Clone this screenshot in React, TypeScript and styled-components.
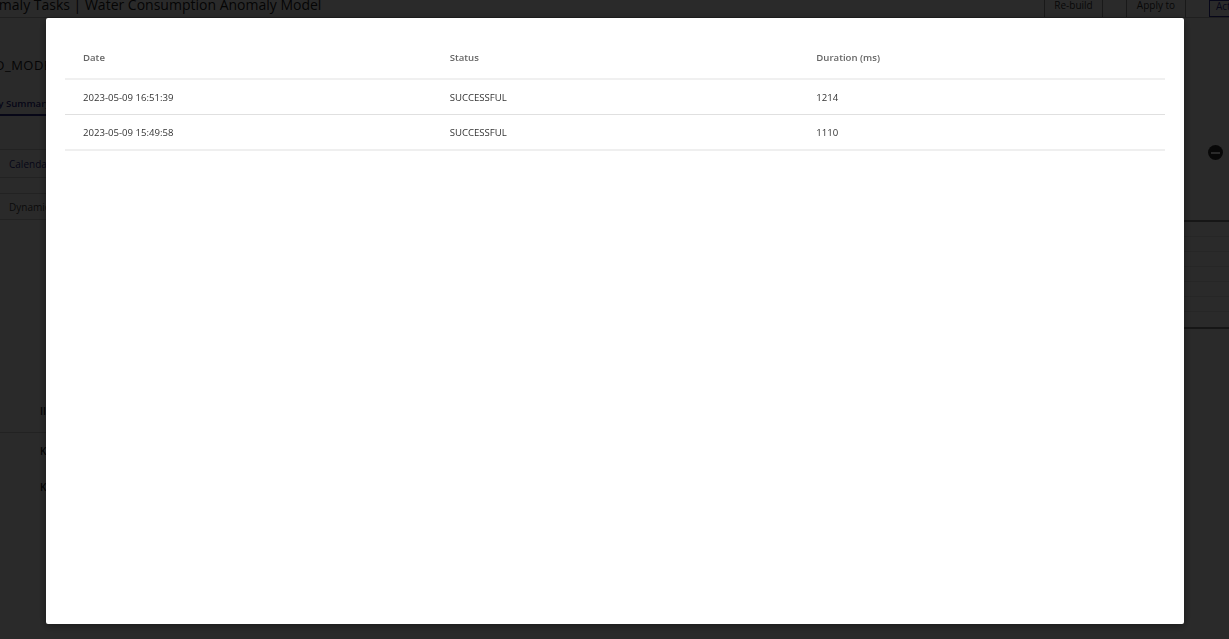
import React from "react";
import styled, { createGlobalStyle } from "styled-components";

const Global = createGlobalStyle`
  html, body { margin: 0; padding: 0; }
  body { font-family: "Open Sans", "Liberation Sans", sans-serif; background: #fff; overflow: hidden; }
  * { box-sizing: border-box; }
`;

const Page = styled.div`
  width: 1229px;
  height: 639px;
  background: #fff;
  overflow: hidden;
  display: flex;
  flex-direction: column;
`;

const Header = styled.header`
  height: 18px;
  display: flex;
  align-items: flex-start;
  border-bottom: 1px solid #bbb;
  overflow: hidden;
`;

const Title = styled.h1`
  margin: -5px 0 0 -27px;
  font-size: 14px;
  font-weight: 400;
  color: #222;
  line-height: 20px;
  flex: 1;
  white-space: nowrap;
`;

const Actions = styled.div`
  display: flex;
  height: 18px;
  margin-right: -20px;
`;

const ActionBtn = styled.div<{ $outlined?: boolean; $w: number }>`
  width: ${(p) => p.$w}px;
  height: 17px;
  font-size: 10px;
  line-height: 10px;
  text-align: center;
  white-space: nowrap;
  overflow: hidden;
  color: ${(p) => (p.$outlined ? "#2c2c9a" : "#333")};
  border-left: 1px solid #999;
  border-right: 1px solid #999;
  ${(p) => (p.$outlined ? "border: 1px solid #2c2c9a; text-align: left; padding-left: 6px;" : "")}
  & + & { margin-left: 23px; }
`;

const Body = styled.div`
  flex: 1;
  display: flex;
`;

const LeftCol = styled.div`
  width: 600px;
  margin-left: -10px;
  display: flex;
  flex-direction: column;
`;

const ModelName = styled.div`
  margin-top: 38px;
  margin-left: 5px;
  font-size: 13px;
  color: #222;
  letter-spacing: 0.5px;
`;

const Tabs = styled.div`
  margin-top: 21px;
  display: flex;
`;

const Tab = styled.div<{ $active?: boolean }>`
  font-size: 9.6px;
  font-weight: 600;
  padding: 2px 0 4px 0;
  white-space: nowrap;
  margin-left: ${(p) => (p.$active ? "-20px" : "30px")};
  color: ${(p) => (p.$active ? "#2a2a8a" : "#555")};
  border-bottom: 2px solid ${(p) => (p.$active ? "#2a2a8a" : "transparent")};
`;

const SideList = styled.div`
  margin-top: 33px;
  display: flex;
  flex-direction: column;
`;

const SideItem = styled.div<{ $active?: boolean; $h: number; $gap?: number }>`
  height: ${(p) => p.$h}px;
  margin-top: ${(p) => p.$gap ?? 0}px;
  padding-left: 19px;
  display: flex;
  align-items: center;
  font-size: 10px;
  color: ${(p) => (p.$active ? "#2a2a8a" : "#444")};
  border-top: 1px solid #ccc;
  border-bottom: 1px solid #ccc;
`;

const Props = styled.div`
  margin-top: 169px;
  display: flex;
  flex-direction: column;
  width: 300px;
`;

const PropRow = styled.div<{ $line?: boolean; $h: number }>`
  height: ${(p) => p.$h}px;
  padding-left: 50px;
  display: flex;
  align-items: center;
  font-size: 10px;
  font-weight: 600;
  color: #222;
  border-bottom: ${(p) => (p.$line ? "1px solid #ccc" : "none")};
`;

const RightCol = styled.div`
  flex: 1;
  display: flex;
  flex-direction: column;
  align-items: flex-end;
`;

const MinusIcon = styled.div`
  margin-top: 127px;
  margin-right: 6px;
  width: 15px;
  height: 15px;
  border-radius: 50%;
  background: #333;
  display: flex;
  align-items: center;
  justify-content: center;
  &::after {
    content: "";
    width: 9px;
    height: 2px;
    background: #fff;
  }
`;

const DataTableBg = styled.div`
  margin-top: 60px;
  width: 500px;
  border-top: 2px solid #888;
  border-bottom: 2px solid #888;
`;

const DataRowBg = styled.div`
  height: 15px;
  border-bottom: 1px solid #e4e4e4;
  &:last-child { border-bottom: none; }
`;

const Overlay = styled.div`
  position: fixed;
  inset: 0;
  background: rgba(0, 0, 0, 0.835);
  display: flex;
  padding: 18px 45px 15px 46px;
`;

const Modal = styled.div`
  flex: 1;
  background: #fff;
  border-radius: 2px;
  box-shadow: 0 2px 8px rgba(0, 0, 0, 0.4);
  padding: 18px 19px 19px 19px;
`;

const Table = styled.table`
  width: 100%;
  border-collapse: collapse;
  table-layout: fixed;
`;

const Th = styled.th`
  text-align: left;
  font-size: 9.6px;
  font-weight: 600;
  color: #666;
  height: 43px;
  padding: 0 18px;
  border-bottom: 2px solid #f0f0f0;
  vertical-align: middle;
`;

const Td = styled.td<{ $last?: boolean }>`
  font-size: 9.6px;
  color: #333;
  height: ${(p) => (p.$last ? 36 : 35)}px;
  padding: ${(p) => (p.$last ? "1px 18px 0" : "1px 18px 0")};
  border-bottom: ${(p) => (p.$last ? "2px solid #efefef" : "1px solid #e0e0e0")};
  vertical-align: middle;
`;

const rows = [
  { date: "2023-05-09 16:51:39", status: "SUCCESSFUL", duration: "1214" },
  { date: "2023-05-09 15:49:58", status: "SUCCESSFUL", duration: "1110" },
];

export default function App() {
  return (
    <>
      <Global />
      <Page>
        <Header>
          <Title>Anomaly Tasks | Water Consumption Anomaly Model</Title>
          <Actions>
            <ActionBtn $w={59}>Re-build</ActionBtn>
            <ActionBtn $w={60}>Apply to</ActionBtn>
            <ActionBtn $w={40} $outlined>Actions</ActionBtn>
          </Actions>
        </Header>
        <Body>
          <LeftCol>
            <ModelName>D_MODEL</ModelName>
            <Tabs>
              <Tab $active>Weekly Summary</Tab>
              <Tab>Details</Tab>
            </Tabs>
            <SideList>
              <SideItem $active $h={29}>Calendar</SideItem>
              <SideItem $h={27} $gap={15}>Dynamic</SideItem>
            </SideList>
            <Props>
              <PropRow $line $h={44}>II</PropRow>
              <PropRow $h={36}>K</PropRow>
              <PropRow $h={36}>K</PropRow>
            </Props>
          </LeftCol>
          <RightCol>
            <MinusIcon />
            <DataTableBg>
              {Array.from({ length: 7 }).map((_, i) => (
                <DataRowBg key={i} />
              ))}
            </DataTableBg>
          </RightCol>
        </Body>
      </Page>
      <Overlay>
        <Modal>
          <Table>
            <thead>
              <tr>
                <Th>Date</Th>
                <Th>Status</Th>
                <Th>Duration (ms)</Th>
              </tr>
            </thead>
            <tbody>
              {rows.map((r, i) => (
                <tr key={r.date}>
                  <Td $last={i === rows.length - 1}>{r.date}</Td>
                  <Td $last={i === rows.length - 1}>{r.status}</Td>
                  <Td $last={i === rows.length - 1}>{r.duration}</Td>
                </tr>
              ))}
            </tbody>
          </Table>
        </Modal>
      </Overlay>
    </>
  );
}
